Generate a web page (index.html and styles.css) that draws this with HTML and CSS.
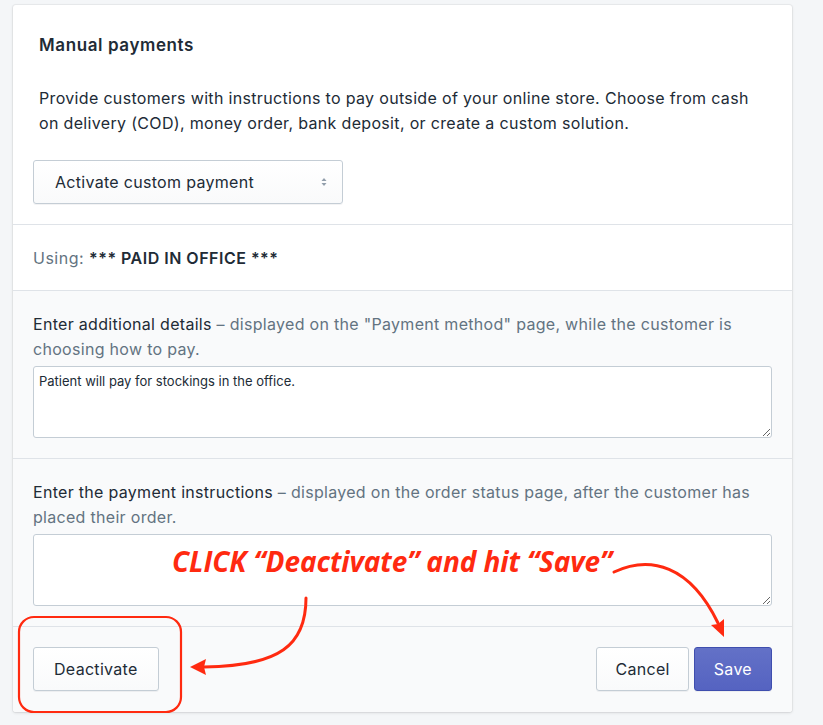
FILE: index.html
```html
<!DOCTYPE html>
<html>
<head>
<meta charset="utf-8">
<link rel="stylesheet" href="styles.css">
</head>
<body>
<div class="page">
  <div class="card">
    <section class="sec sec-intro">
      <h2 class="title">Manual payments</h2>
      <p class="desc">Provide customers with instructions to pay outside of your online store. Choose from cash on delivery (COD), money order, bank deposit, or create a custom solution.</p>
      <div class="select">
        <span>Activate custom payment</span>
        <svg class="caret" width="8" height="12" viewBox="0 0 8 12"><path d="M4 2 L6.5 5 H1.5 Z" fill="#919eab"/><path d="M4 10 L6.5 7 H1.5 Z" fill="#919eab"/></svg>
      </div>
    </section>
    <section class="sec sec-using">
      <p class="using"><span class="muted">Using:</span> <strong>*** PAID IN OFFICE ***</strong></p>
    </section>
    <section class="sec sec-gray">
      <p class="label">Enter additional details <span class="muted">– displayed on the "Payment method" page, while the customer is choosing how to pay.</span></p>
      <textarea class="area">Patient will pay for stockings in the office.</textarea>
    </section>
    <section class="sec sec-gray">
      <p class="label">Enter the payment instructions <span class="muted">– displayed on the order status page, after the customer has placed their order.</span></p>
      <textarea class="area"></textarea>
    </section>
    <section class="sec sec-gray sec-footer">
      <button class="btn btn-wide">Deactivate</button>
      <div class="actions">
        <button class="btn btn-side">Cancel</button>
        <button class="btn btn-primary">Save</button>
      </div>
    </section>
  </div>

  <div class="note">CLICK “Deactivate” and hit “Save”</div>
  <svg class="overlay" width="823" height="725" viewBox="0 0 823 725">
    <rect x="19" y="617" width="162" height="95" rx="15" ry="15" fill="none" stroke="#ff2a10" stroke-width="2.2"/>
    <path d="M306 598 C306 645 280 666 204 667" fill="none" stroke="#ff2a10" stroke-width="3" stroke-linecap="round"/>
    <path d="M190 667 L206 659 L204 667 L206 675 Z" fill="#ff2a10"/>
    <path d="M614 572 C650 555 690 565 718 623" fill="none" stroke="#ff2a10" stroke-width="3" stroke-linecap="round"/>
    <path d="M724 637 L711 625 L718 624 L724 619 Z" fill="#ff2a10"/>
  </svg>
</div>
</body>
</html>
```

FILE: styles.css
```css
* { box-sizing: border-box; }
html, body { margin: 0; padding: 0; }
body {
  background: #f4f6f8;
  font-family: Inter, "Noto Sans", sans-serif;
  color: #212b36;
  width: 823px;
  height: 725px;
  overflow: hidden;
}
.page {
  position: relative;
  width: 823px;
  height: 725px;
  padding: 5px 31px 13px 13px;
}
.card {
  background: #fff;
  border-radius: 3px;
  box-shadow: 0 0 0 1px rgba(63,63,68,0.05), 0 1px 3px 0 rgba(63,63,68,0.15);
  overflow: hidden;
  width: 779px;
}
.sec {
  padding: 20px;
  border-top: 1px solid #dfe3e8;
}
.sec:first-child { border-top: 0; }
.sec-intro { padding-top: 28px; padding-bottom: 20px; }
.title {
  margin: 0 0 29px 0;
  padding-left: 6px;
  font-size: 17px;
  line-height: 24px;
  font-weight: 600;
  letter-spacing: 0.6px;
}
.desc {
  margin: 0 0 24px 0;
  padding: 0 20px 0 6px;
  font-size: 16px;
  line-height: 25px;
  letter-spacing: 0.33px;
}
.select {
  width: 310px;
  height: 44px;
  border: 1px solid #c4cdd5;
  border-radius: 3px;
  background: linear-gradient(#fff, #f9fafb);
  box-shadow: 0 1px 0 0 rgba(22,29,37,0.05);
  display: flex;
  align-items: center;
  justify-content: space-between;
  padding: 0 14px 0 21px;
  font-size: 16px;
  letter-spacing: 0.3px;
}
.sec-using { padding-top: 21px; padding-bottom: 20px; }
.using { margin: 0; font-size: 16px; line-height: 24px; letter-spacing: 0.5px; }
.using strong { font-weight: 600; }
.muted { color: #637381; }
.sec-gray { background: #f9fafb; padding-top: 21px; padding-bottom: 20px; }
.label {
  margin: 0 0 4px 0;
  font-size: 16px;
  line-height: 25px;
  letter-spacing: 0.3px;
}
.area {
  display: block;
  width: 739px;
  height: 72px;
  border: 1px solid #c4cdd5;
  border-radius: 3px;
  background: #fff;
  font-family: Inter, "Noto Sans", sans-serif;
  font-size: 13px;
  line-height: 18px;
  color: #212b36;
  padding: 5px 5px;
  margin: 0;
  resize: vertical;
}
.sec-footer {
  display: flex;
  justify-content: space-between;
  align-items: center;
  padding-top: 20px;
  padding-bottom: 21px;
}
.actions { display: flex; gap: 5px; }
.btn {
  height: 44px;
  padding: 0 19px;
  border: 1px solid #c4cdd5;
  border-radius: 3px;
  background: linear-gradient(#fff, #f9fafb);
  box-shadow: 0 1px 0 0 rgba(22,29,37,0.05);
  font-family: Inter, "Noto Sans", sans-serif;
  font-size: 16px;
  color: #212b36;
  letter-spacing: 0.3px;
}
.btn-wide { padding: 0 20px; }
.btn-side { padding: 0 18px; }
.btn-primary {
  background: linear-gradient(#6371c7, #5563c1);
  border-color: #3f4eae;
  color: #fff;
  padding: 0 19px;
}
.note {
  position: absolute;
  left: 172px;
  top: 541px;
  font-family: "Open Sans", sans-serif;
  font-weight: 700;
  font-style: italic;
  font-size: 28px;
  line-height: 40px;
  color: #ff2a10;
  white-space: nowrap;
  letter-spacing: -0.1px;
}
.overlay {
  position: absolute;
  left: 0;
  top: 0;
  pointer-events: none;
}
```
